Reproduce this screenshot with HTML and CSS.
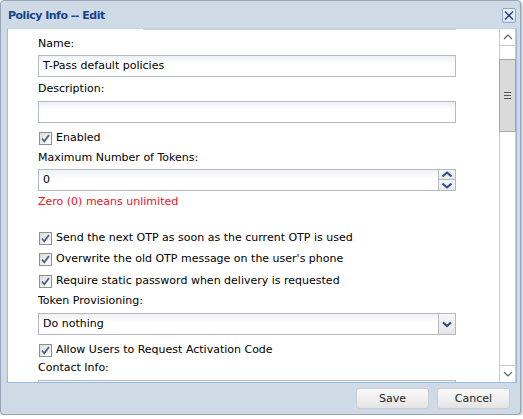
FILE: index.html
```html
<!DOCTYPE html>
<html>
<head>
<meta charset="utf-8">
<link rel="stylesheet" href="styles.css">
</head>
<body>
<div class="window">
  <div class="titlebar">
    <span class="title">Policy Info -- Edit</span>
    <span class="close"><svg width="12" height="13" viewBox="0 0 12 13"><path d="M2 2.5 L10 10.5 M10 2.5 L2 10.5" stroke="#1f3f7a" stroke-width="1.4" fill="none"/></svg></span>
  </div>
  <div class="panel">
    <div class="form">
      <div class="prev-line"></div>
      <div class="label mt6">Name:</div>
      <div class="field mt3">T-Pass default policies</div>
      <div class="label mt4">Description:</div>
      <div class="field mt4"></div>
      <div class="check mt7"><span class="box"><svg width="13" height="13" viewBox="0 0 13 13"><path d="M3 6.5 L5.3 9.3 L10 3" stroke="#4d6185" stroke-width="1.8" fill="none"/></svg></span>Enabled</div>
      <div class="label mt4">Maximum Number of Tokens:</div>
      <div class="field mt3 with-btn">0
        <span class="spin">
          <span class="spin-half"><svg width="12" height="7" viewBox="0 0 12 7"><path d="M1.5 5.5 L6 1.5 L10.5 5.5" stroke="#2b4c8c" stroke-width="2" fill="none"/></svg></span>
          <span class="spin-half"><svg width="12" height="7" viewBox="0 0 12 7"><path d="M1.5 1.5 L6 5.5 L10.5 1.5" stroke="#2b4c8c" stroke-width="2" fill="none"/></svg></span>
        </span>
      </div>
      <div class="label hint mt3">Zero (0) means unlimited</div>
      <div class="check mt20"><span class="box"><svg width="13" height="13" viewBox="0 0 13 13"><path d="M3 6.5 L5.3 9.3 L10 3" stroke="#4d6185" stroke-width="1.8" fill="none"/></svg></span>Send the next OTP as soon as the current OTP is used</div>
      <div class="check mt5"><span class="box"><svg width="13" height="13" viewBox="0 0 13 13"><path d="M3 6.5 L5.3 9.3 L10 3" stroke="#4d6185" stroke-width="1.8" fill="none"/></svg></span>Overwrite the old OTP message on the user's phone</div>
      <div class="check mt6"><span class="box"><svg width="13" height="13" viewBox="0 0 13 13"><path d="M3 6.5 L5.3 9.3 L10 3" stroke="#4d6185" stroke-width="1.8" fill="none"/></svg></span>Require static password when delivery is requested</div>
      <div class="label mt4">Token Provisioning:</div>
      <div class="field mt4 with-btn">Do nothing
        <span class="trigger"><svg width="12" height="7" viewBox="0 0 12 7"><path d="M2 1.5 L6 5 L10 1.5" stroke="#2b4c8c" stroke-width="2.2" fill="none"/></svg></span>
      </div>
      <div class="check mt7"><span class="box"><svg width="13" height="13" viewBox="0 0 13 13"><path d="M3 6.5 L5.3 9.3 L10 3" stroke="#4d6185" stroke-width="1.8" fill="none"/></svg></span>Allow Users to Request Activation Code</div>
      <div class="label mt2">Contact Info:</div>
      <div class="field mt4"></div>
    </div>
    <div class="scrollbar">
      <div class="sb-btn"><svg width="10" height="6" viewBox="0 0 10 6"><path d="M1 5 L5 1 L9 5" stroke="#606060" stroke-width="1.2" fill="none"/></svg></div>
      <div class="sb-gap"></div>
      <div class="sb-thumb"><span></span><span></span><span></span></div>
      <div class="sb-track"></div>
      <div class="sb-btn sb-down"><svg width="10" height="6" viewBox="0 0 10 6"><path d="M1 1 L5 5 L9 1" stroke="#606060" stroke-width="1.2" fill="none"/></svg></div>
    </div>
  </div>
  <div class="footer">
    <div class="btn">Save</div>
    <div class="btn">Cancel</div>
  </div>
</div>
</body>
</html>
```

FILE: styles.css
```css
html, body {
  margin: 0;
  padding: 0;
  background: #ffffff;
}
body {
  font-family: "DejaVu Sans", Verdana, sans-serif;
  font-size: 11px;
  color: #000;
}
.window {
  box-sizing: border-box;
  width: 521px;
  height: 415px;
  background: #cfdae7;
  border: 1px solid #98a6b8;
  border-radius: 4px;
  box-shadow: 1px 1px 3px rgba(0,0,0,0.35);
  display: flex;
  flex-direction: column;
}
.titlebar {
  height: 27px;
  flex: none;
  display: flex;
  align-items: center;
  justify-content: space-between;
  padding: 0 4px 0 7px;
}
.title {
  font-weight: bold;
  color: #15428b;
  letter-spacing: -0.5px;
  margin-top: 1px;
}
.close {
  box-sizing: border-box;
  width: 14px;
  height: 15px;
  border: 1px solid #8eaad4;
  border-radius: 2px;
  background: linear-gradient(#f2f6fc, #d6e2f3);
  display: flex;
  align-items: center;
  justify-content: center;
  margin-top: 2px;
}
.panel {
  box-sizing: border-box;
  height: 355px;
  width: 510px;
  margin-left: 6px;
  border: 1px solid #99bbe8;
  border-top-color: #c5d3e3;
  background: #fff;
  display: flex;
  flex: none;
  overflow: hidden;
}
.form {
  flex: 1;
  display: flex;
  flex-direction: column;
  padding-left: 30px;
  overflow: hidden;
}
.prev-line {
  height: 1px;
  width: 313px;
  margin-left: 105px;
  background: #d4d4d4;
  flex: none;
}
.label {
  height: 16px;
  line-height: 16px;
  white-space: nowrap;
  flex: none;
}
.hint { color: #ee1122; }
.field {
  box-sizing: border-box;
  position: relative;
  width: 418px;
  height: 22px;
  line-height: 20px;
  border: 1px solid #b5b8c8;
  background: linear-gradient(#eef0f2 0, #ffffff 8px);
  padding-left: 4px;
  flex: none;
  white-space: nowrap;
}
.spin {
  position: absolute;
  right: -1px;
  top: -1px;
  width: 18px;
  height: 22px;
  display: flex;
  flex-direction: column;
}
.spin-half {
  box-sizing: border-box;
  height: 11px;
  border: 1px solid #b5b8c8;
  background: linear-gradient(#f7f7f7, #e9e9e9);
  display: flex;
  align-items: center;
  justify-content: center;
}
.spin-half + .spin-half { border-top: none; height: 11px; }
.trigger {
  position: absolute;
  right: -1px;
  top: -1px;
  box-sizing: border-box;
  width: 18px;
  height: 22px;
  border: 1px solid #b5b8c8;
  background: linear-gradient(#f7f7f7, #e6e6e6);
  display: flex;
  align-items: center;
  justify-content: center;
}
.check {
  height: 16px;
  line-height: 16px;
  display: flex;
  align-items: center;
  white-space: nowrap;
  flex: none;
}
.box {
  box-sizing: border-box;
  width: 13px;
  height: 13px;
  border: 1px solid #8e8f8f;
  background: linear-gradient(135deg, #dcdcdc, #ffffff);
  margin-left: 1px;
  margin-right: 4px;
  display: flex;
  align-items: center;
  justify-content: center;
}
.box svg { margin: -1px; }
.mt2 { margin-top: 2px; }
.mt3 { margin-top: 3px; }
.mt4 { margin-top: 4px; }
.mt5 { margin-top: 5px; }
.mt6 { margin-top: 6px; }
.mt7 { margin-top: 7px; }
.mt20 { margin-top: 20px; }
.scrollbar {
  box-sizing: border-box;
  width: 17px;
  flex: none;
  border-left: 1px solid #c8c8c8;
  border-right: 1px solid #c8c8c8;
  display: flex;
  flex-direction: column;
  background: #fff;
}
.sb-btn {
  height: 16px;
  flex: none;
  border-bottom: 1px solid #c8c8c8;
  display: flex;
  align-items: center;
  justify-content: center;
}
.sb-down {
  border-bottom: none;
  border-top: 1px solid #c8c8c8;
}
.sb-gap { height: 13px; flex: none; }
.sb-thumb {
  box-sizing: border-box;
  height: 73px;
  flex: none;
  margin: 0 -1px;
  background: #dadada;
  border: 1px solid #a6a6a6;
  display: flex;
  flex-direction: column;
  align-items: center;
  justify-content: center;
  gap: 2px;
}
.sb-thumb span {
  width: 7px;
  height: 1px;
  background: #555;
}
.sb-track { flex: 1; }
.footer {
  flex: 1;
  display: flex;
  justify-content: flex-end;
  align-items: flex-start;
  gap: 8px;
  padding: 5px 10px 0 0;
}
.btn {
  box-sizing: border-box;
  width: 73px;
  height: 21px;
  line-height: 19px;
  text-align: center;
  border: 1px solid #c9cdd3;
  border-radius: 3px;
  background: linear-gradient(#fafafa, #f0f0f0 50%, #e3e3e3);
  color: #222;
}
```
